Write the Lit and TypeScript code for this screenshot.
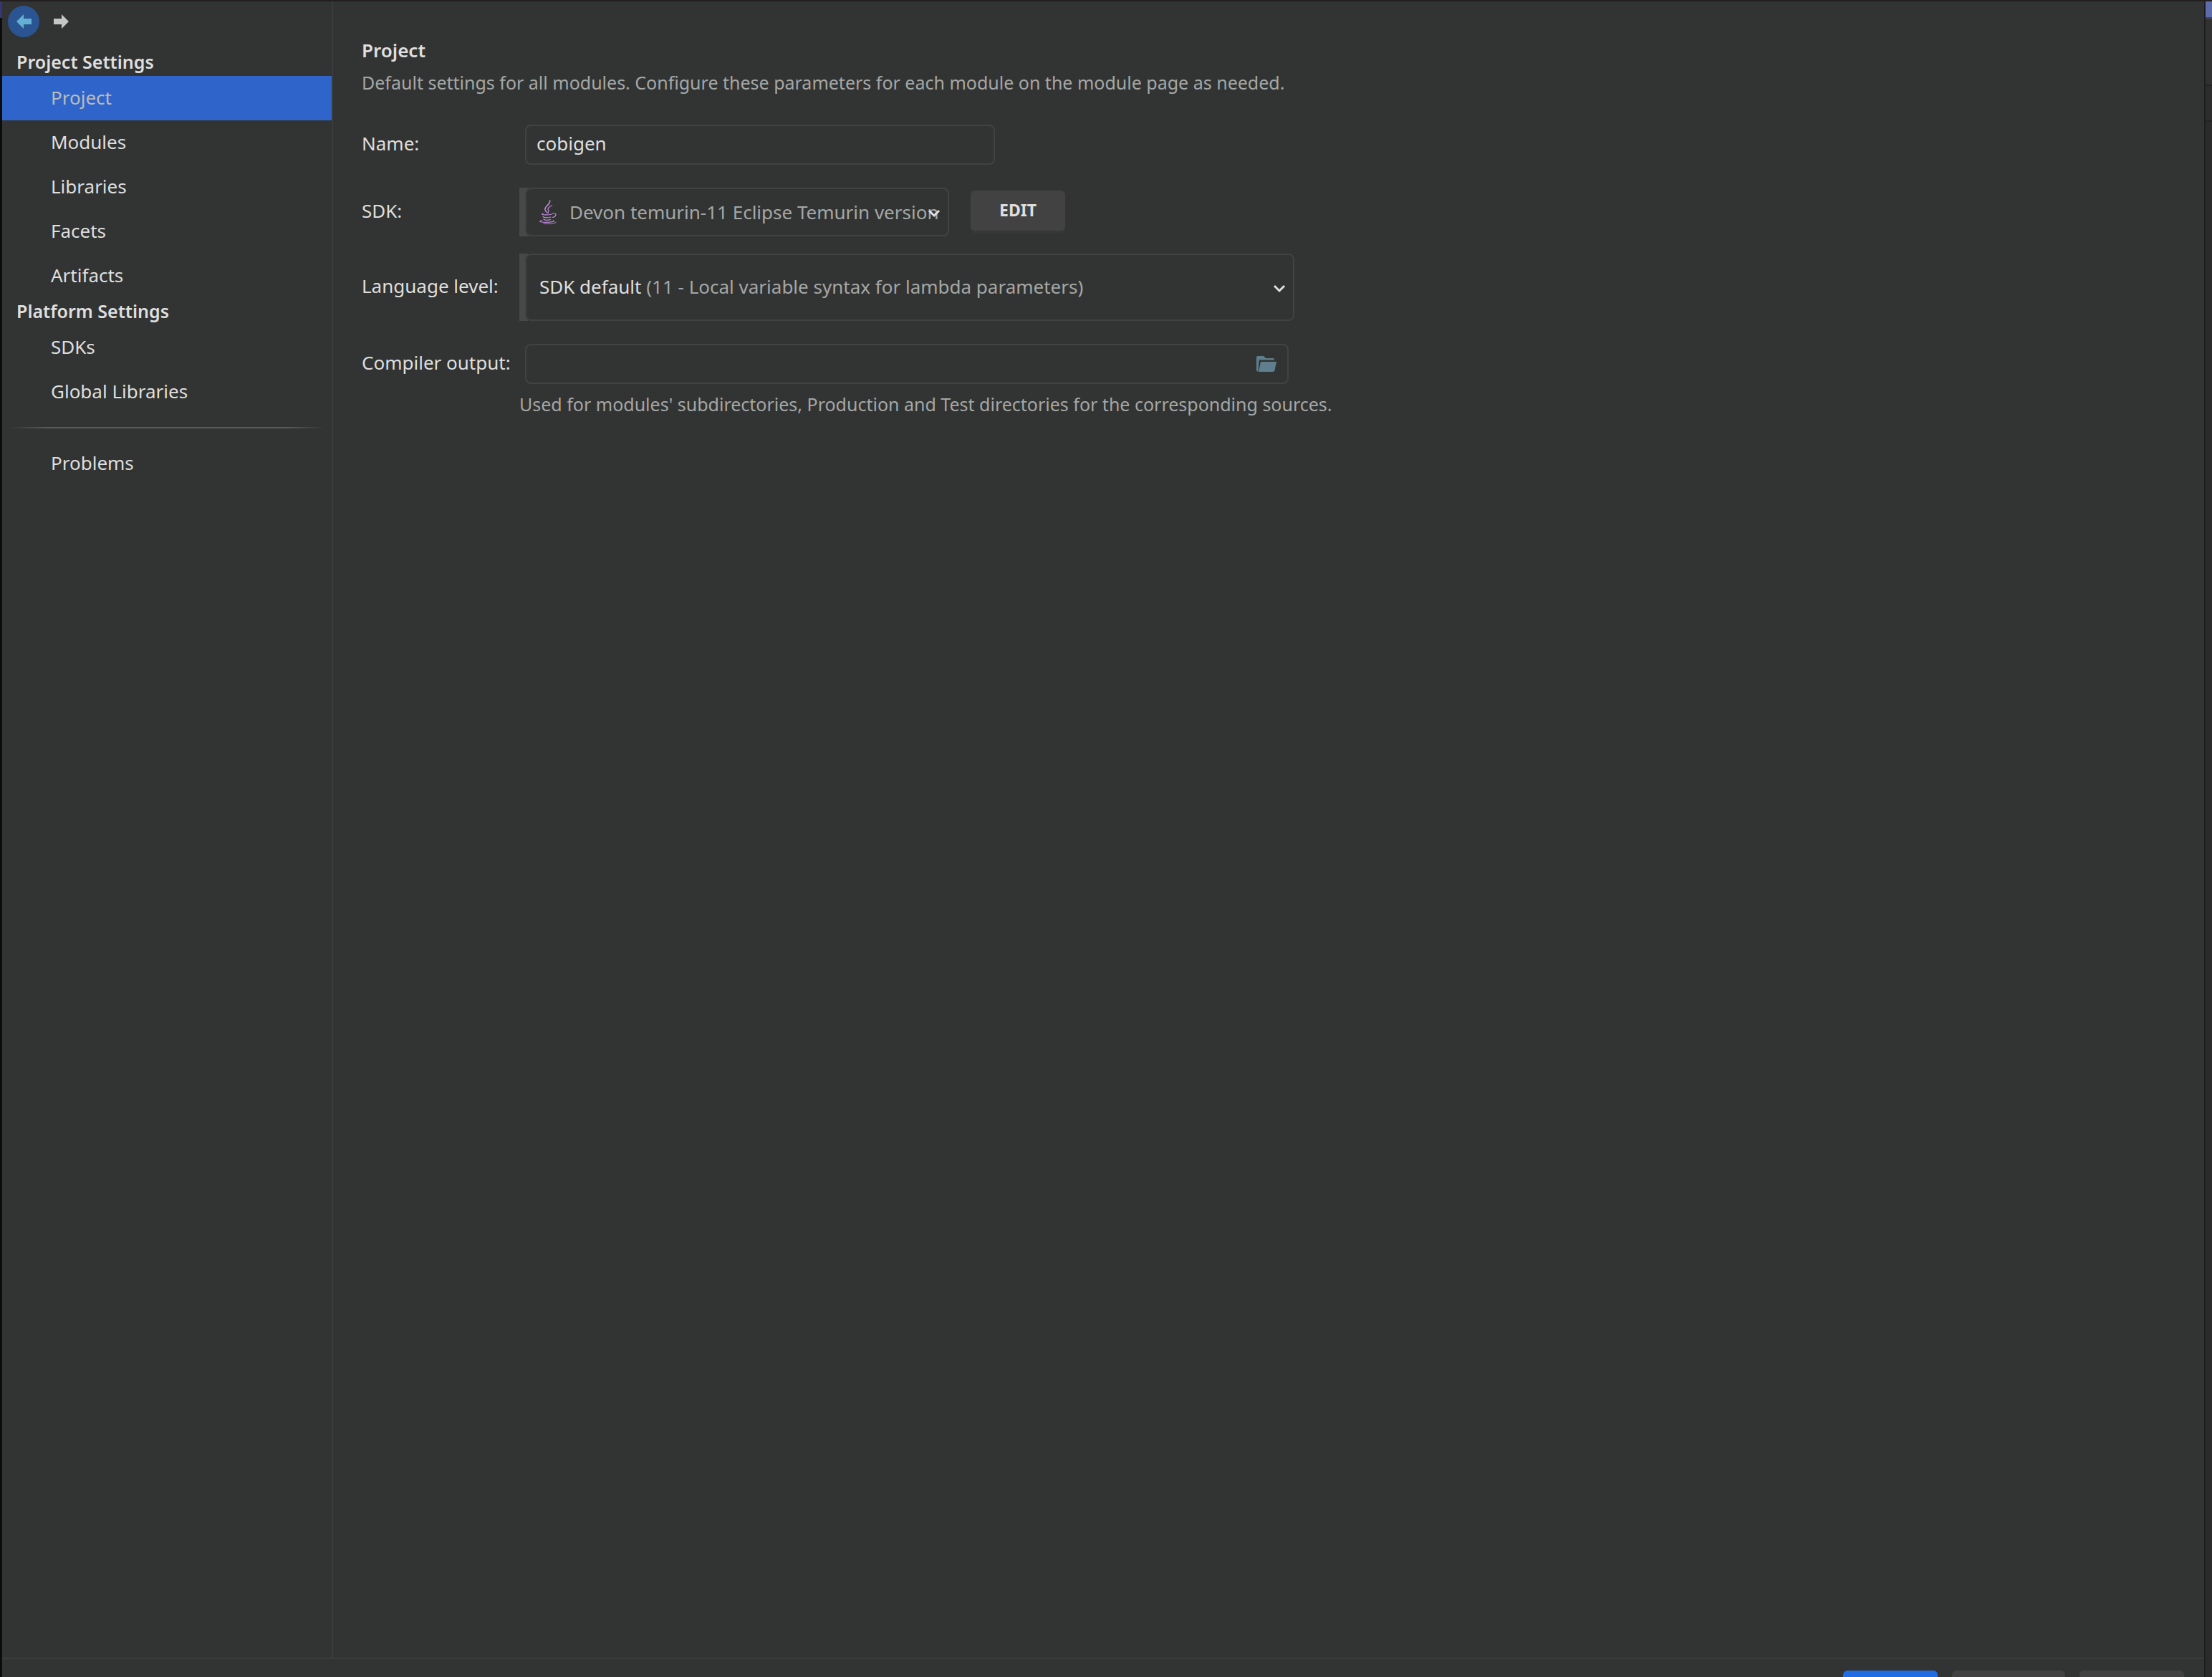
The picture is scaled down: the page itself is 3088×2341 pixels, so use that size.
import { LitElement, html, css, svg } from "lit";
import { customElement, state } from "lit/decorators.js";

interface NavSection {
  title: string;
  items: string[];
}

const SECTIONS: NavSection[] = [
  { title: "Project Settings", items: ["Project", "Modules", "Libraries", "Facets", "Artifacts"] },
  { title: "Platform Settings", items: ["SDKs", "Global Libraries"] },
];

const arrow = svg`<path d="M0 10 10 0V6H21V14H10V20Z" fill="currentColor" />`;

const chevron = html`<svg class="chevron" viewBox="0 0 18 12" aria-hidden="true">
  <path d="M2 2 9 9 16 2" fill="none" stroke="currentColor" stroke-width="3" />
</svg>`;

const javaIcon = html`<svg class="java" viewBox="0 0 26 34" aria-hidden="true">
  <g fill="none" stroke="currentColor" stroke-linecap="round">
    <path d="M15.500 1C17.500 6 7.500 9 9 14C9.500 15.500 11 17 12 18" stroke-width="1.600" />
    <path d="M18.500 8C14.500 9.500 12 12 13.500 14.500C14.500 16 14 17 13 18.500" stroke-width="1.300" />
    <path d="M6 19C1 21 12 21.500 18.500 20" stroke-width="1.200" />
    <path d="M19.500 19C26 17.500 25 23 19.500 24.500" stroke-width="1.200" />
    <path d="M6 23.500C8 25.500 14 25 17 24" stroke-width="1.200" />
    <path d="M7 27C9 29 14 28.500 16.500 27.500" stroke-width="1.200" />
    <path d="M5 28.500C-3 30.500 5 31.500 12 31.300C19 31 23.500 30 20.500 29" stroke-width="1.200" />
    <path d="M7 33.200C15 34 24 33 24.500 31" stroke-width="1" />
  </g>
</svg>`;

const folderIcon = html`<svg class="folder" viewBox="0 0 28 22" aria-hidden="true">
  <path
    d="M0 20V2Q0 0 2 0H10L13 3H23Q25 3 25 5V5.500H3.500V7L2.500 21.500Q0 21.500 0 20Z"
    fill="currentColor"
  />
  <path d="M6 8H28L25.500 20Q25 22 23 22H3Z" fill="currentColor" />
</svg>`;

@customElement("settings-sidebar")
export class SettingsSidebar extends LitElement {
  @state() private selected = "Project";

  static styles = css`
    :host {
      display: block;
      border-right: 2px solid #3a3c3d;
      color: #dfdfdf;
    }
    button {
      font: inherit;
      color: inherit;
      background: none;
      border: 0;
      margin: 0;
      padding: 0;
      cursor: pointer;
    }
    .history {
      display: flex;
      gap: 8px;
      padding: 6px 8px 16px;
    }
    .step {
      display: grid;
      place-items: center;
      width: 44px;
      height: 44px;
      border-radius: 50%;
      color: #c6c6c6;
    }
    .step svg {
      width: 21px;
      height: 20px;
    }
    .step.back {
      background: #2a5492;
      color: #62b0d3;
    }
    .step.forward svg {
      transform: scaleX(-1);
    }
    .section {
      margin: 0;
      padding: 0 20px 2px;
      font-size: 25px;
      font-weight: 600;
      line-height: 36px;
    }
    .list {
      list-style: none;
      margin: 0;
      padding: 0;
    }
    .item {
      display: block;
      width: 100%;
      height: 62px;
      padding: 0 68px 2px;
      text-align: left;
    }
    .item.selected {
      background: #2f65ca;
      color: #bbbbbb;
    }
    .divider {
      height: 2px;
      margin: 18px 10px;
      border: 0;
      background: linear-gradient(90deg, transparent, #5a5c5b 12%, #5a5c5b 88%, transparent);
    }
  `;

  private item(name: string) {
    const on = this.selected === name;
    return html`<li>
      <button
        class="item ${on ? "selected" : ""}"
        aria-current=${on ? "page" : "false"}
        @click=${() => (this.selected = name)}
      >
        ${name}
      </button>
    </li>`;
  }

  render() {
    return html`
      <div class="history">
        <button class="step back" aria-label="Back"><svg viewBox="0 0 21 20">${arrow}</svg></button>
        <button class="step forward" aria-label="Forward">
          <svg viewBox="0 0 21 20">${arrow}</svg>
        </button>
      </div>
      <nav>
        ${SECTIONS.map(
          (s) => html`<h2 class="section">${s.title}</h2>
            <ul class="list">
              ${s.items.map((i) => this.item(i))}
            </ul>`
        )}
        <hr class="divider" />
        <ul class="list">
          ${this.item("Problems")}
        </ul>
      </nav>
    `;
  }
}

@customElement("project-form")
export class ProjectForm extends LitElement {
  static styles = css`
    :host {
      display: block;
      padding: 49px 40px;
      color: #dfdfdf;
    }
    * {
      box-sizing: border-box;
    }
    .title {
      margin: 0 0 8px;
      font-size: 26px;
      font-weight: 600;
      line-height: 38px;
    }
    .hint {
      margin: 0;
      font-size: 25px;
      line-height: 36px;
      color: #a5a7a6;
    }
    .form {
      display: grid;
      grid-template-columns: 220px 1fr;
      row-gap: 24px;
      margin-top: 33px;
      align-items: center;
    }
    .label {
      padding-bottom: 4px;
      white-space: nowrap;
    }
    .field {
      display: flex;
      align-items: center;
      height: 56px;
      margin: 8px;
      border: 2px solid #414342;
      border-radius: 8px;
    }
    .name {
      max-width: 656px;
    }
    .output {
      max-width: 1066px;
      padding-right: 15px;
    }
    .input {
      flex: 1;
      min-width: 0;
      height: 100%;
      padding: 0 14px 4px;
      border: 0;
      outline: 0;
      background: none;
      font: inherit;
      color: inherit;
    }
    .browse {
      display: grid;
      place-items: center;
      padding: 0;
      border: 0;
      background: none;
      color: #5f7f8e;
    }
    .folder {
      width: 28px;
      height: 22px;
    }
    .sdk-row {
      display: flex;
      align-items: center;
      gap: 30px;
    }
    .combo {
      display: grid;
      flex: 1;
      background: linear-gradient(#474949, #474949) left / 12px 100% no-repeat;
      padding-left: 8px;
    }
    .combo.sdk {
      height: 68px;
      max-width: 600px;
    }
    .combo.level {
      height: 94px;
      max-width: 1082px;
    }
    .box {
      display: grid;
      align-items: center;
      min-width: 0;
      border: 2px solid #414342;
      border-radius: 8px;
      background: #323433;
      color: #a5a7a6;
    }
    .box > * {
      grid-area: 1 / 1;
    }
    .box > svg,
    .value {
      pointer-events: none;
    }
    .select {
      appearance: none;
      width: 100%;
      height: 100%;
      border: 0;
      outline: 0;
      background: none;
      font: inherit;
      color: inherit;
      padding: 0 10px 0 60px;
      text-overflow: clip;
    }
    .covered {
      opacity: 0;
    }
    .value {
      padding: 0 18px 2px;
      white-space: nowrap;
    }
    .strong {
      color: #dfdfdf;
    }
    .java {
      width: 26px;
      height: 34px;
      margin-left: 17px;
      color: #b98ad8;
    }
    .chevron {
      width: 18px;
      height: 12px;
      margin: 4px 10px 0;
      justify-self: end;
      color: #dfdfdf;
    }
    .edit {
      width: 132px;
      height: 56px;
      margin-bottom: 4px;
      padding: 0 0 2px;
      border: 0;
      border-radius: 6px;
      background: #434243;
      box-shadow: 0 4px 0 #363737;
      color: #dfdfdf;
      font: inherit;
      font-size: 23px;
      font-weight: 700;
    }
    .help {
      margin-left: 220px;
      padding-top: 2px;
    }
  `;

  render() {
    return html`
      <h1 class="title">Project</h1>
      <p class="hint">
        Default settings for all modules. Configure these parameters for each module on the module
        page as needed.
      </p>
      <form class="form" @submit=${(e: Event) => e.preventDefault()}>
        <label class="label" for="name">Name:</label>
        <div class="field name"><input class="input" id="name" type="text" value="cobigen" /></div>

        <label class="label" for="sdk">SDK:</label>
        <div class="sdk-row">
          <div class="combo sdk">
            <div class="box">
              <select class="select" id="sdk">
                <option>Devon temurin-11 Eclipse Temurin version</option>
              </select>
              ${javaIcon} ${chevron}
            </div>
          </div>
          <button class="edit" type="button">EDIT</button>
        </div>

        <label class="label" for="level">Language level:</label>
        <div class="combo level">
          <div class="box">
            <select class="select covered" id="level">
              <option>SDK default</option>
            </select>
            <span class="value" aria-hidden="true"
              ><span class="strong">SDK default</span> (11 - Local variable syntax for lambda
              parameters)</span
            >
            ${chevron}
          </div>
        </div>

        <label class="label" for="output">Compiler output:</label>
        <div class="field output">
          <input class="input" id="output" type="text" aria-describedby="output-help" />
          <button class="browse" type="button" aria-label="Browse">${folderIcon}</button>
        </div>
      </form>
      <p class="hint help" id="output-help">
        Used for modules' subdirectories, Production and Test directories for the corresponding
        sources.
      </p>
    `;
  }
}

@customElement("app-root")
export class AppRoot extends LitElement {
  static styles = css`
    :host {
      display: grid;
      grid-template-columns: 3px 1fr 11px;
      height: 100vh;
      overflow: hidden;
      box-sizing: border-box;
      border-top: 2px solid #231f20;
      font: 26px / 36px "Noto Sans", "Open Sans", sans-serif;
    }
    .edge-left {
      background: linear-gradient(#35357a 23px, #0c0c0c 23px);
    }
    .edge-right {
      border-left: 2px solid #1e1e1e;
      background: linear-gradient(
        #5f6cab 22px,
        #3d4152 22px 25px,
        #313131 25px 116px,
        #232323 116px 118px,
        #2d2d2d 118px 166px,
        #232323 166px 168px,
        #2b2b2b 168px
      );
    }
    .dialog {
      display: flex;
      flex-direction: column;
      min-width: 0;
      background: #323433;
    }
    .body {
      flex: 1;
      min-height: 0;
      display: grid;
      grid-template-columns: 462px 1fr;
    }
    .footer {
      display: flex;
      flex: none;
      justify-content: flex-end;
      gap: 20px;
      box-sizing: border-box;
      height: 27px;
      padding: 16px 28px 0;
      overflow: hidden;
      border-top: 2px solid #3a3c3d;
    }
    .action {
      flex: none;
      height: 56px;
      border: 0;
      border-radius: 6px;
      background: #434243;
    }
    .ok {
      width: 132px;
      background: #206ce2;
    }
    .cancel {
      width: 158px;
    }
    .apply {
      width: 146px;
    }
  `;

  render() {
    return html`
      <div class="edge-left"></div>
      <div class="dialog">
        <div class="body">
          <settings-sidebar></settings-sidebar>
          <project-form></project-form>
        </div>
        <footer class="footer">
          <button class="action ok" aria-label="OK"></button>
          <button class="action cancel" aria-label="Cancel"></button>
          <button class="action apply" aria-label="Apply"></button>
        </footer>
      </div>
      <div class="edge-right"></div>
    `;
  }
}
